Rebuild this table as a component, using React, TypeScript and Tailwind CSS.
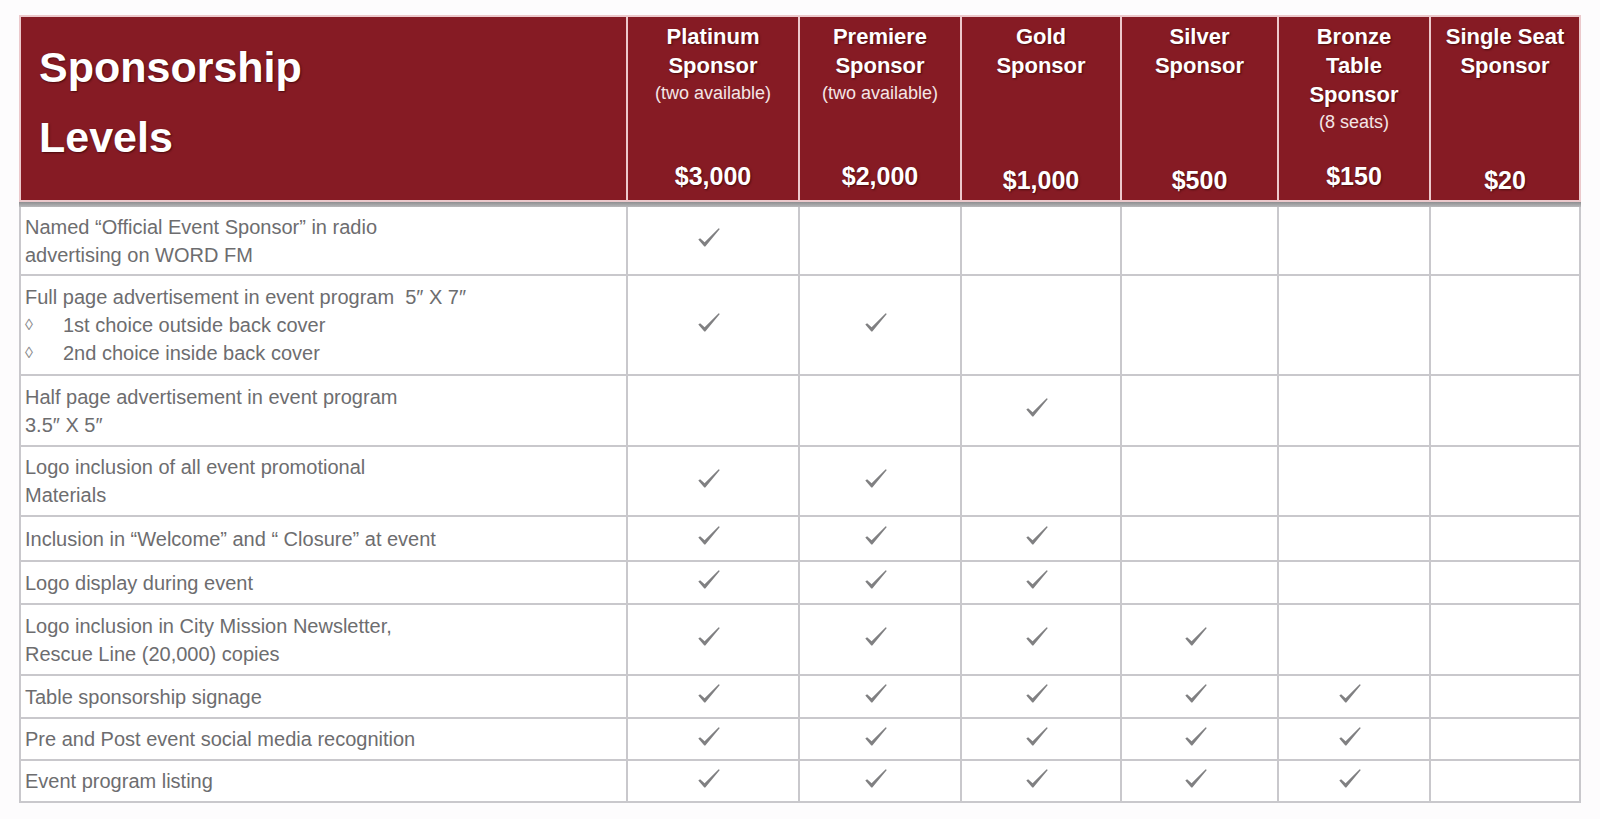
import React from 'react'

// column order: platinum, premiere, gold, silver, bronze, single seat
type Row = {
  lines: React.ReactNode[]
  checks: boolean[]
  h: string
}

const rows: Row[] = [
  {
    lines: ['Named “Official Event Sponsor” in radio', 'advertising on WORD FM'],
    checks: [true, false, false, false, false, false],
    h: 'h-[69px]',
  },
  {
    lines: [
      'Full page advertisement in event program\u00a0\u00a05″ X 7″',
      <Bullet key="a" text="1st choice outside back cover" />,
      <Bullet key="b" text="2nd choice inside back cover" />,
    ],
    checks: [true, true, false, false, false, false],
    h: 'h-[100px]',
  },
  {
    lines: ['Half page advertisement in event program', '3.5″ X 5″'],
    checks: [false, false, true, false, false, false],
    h: 'h-[71px]',
  },
  {
    lines: ['Logo inclusion of all event promotional', 'Materials'],
    checks: [true, true, false, false, false, false],
    h: 'h-[70px]',
  },
  {
    lines: ['Inclusion in “Welcome” and “ Closure” at event'],
    checks: [true, true, true, false, false, false],
    h: 'h-[45px]',
  },
  {
    lines: ['Logo display during event'],
    checks: [true, true, true, false, false, false],
    h: 'h-[43px]',
  },
  {
    lines: ['Logo inclusion in City Mission Newsletter,', 'Rescue Line (20,000) copies'],
    checks: [true, true, true, true, false, false],
    h: 'h-[71px]',
  },
  {
    lines: ['Table sponsorship signage'],
    checks: [true, true, true, true, true, false],
    h: 'h-[43px]',
  },
  {
    lines: ['Pre and Post event social media recognition'],
    checks: [true, true, true, true, true, false],
    h: 'h-[42px]',
  },
  {
    lines: ['Event program listing'],
    checks: [true, true, true, true, true, false],
    h: 'h-[42px]',
  },
]

const levels = [
  { name: ['Platinum', 'Sponsor'], note: '(two available)', price: '$3,000', low: false },
  { name: ['Premiere', 'Sponsor'], note: '(two available)', price: '$2,000', low: false },
  { name: ['Gold', 'Sponsor'], note: '', price: '$1,000', low: true },
  { name: ['Silver', 'Sponsor'], note: '', price: '$500', low: true },
  { name: ['Bronze', 'Table', 'Sponsor'], note: '(8 seats)', price: '$150', low: false },
  { name: ['Single Seat', 'Sponsor'], note: '', price: '$20', low: true },
]

const cols = 'grid grid-cols-[607px_172px_162px_160px_157px_152px_150px]'
const shadow = '[text-shadow:1px_1px_2px_rgba(40,0,0,0.65)]'

function Bullet({ text }: { text: string }) {
  return (
    <span className="flex">
      <span className="w-[38px] text-[16px] text-[#8a8a8c]">◊</span>
      <span>{text}</span>
    </span>
  )
}

function Check() {
  return (
    <svg width="22" height="19" viewBox="0 0 22 19" className="text-[#808082]">
      <path d="M0.3 11.6 L2.1 10.2 L6.6 14.3 L20.7 0.2 L21.8 1.1 L7.3 18.4 L6.3 18.4 Z" fill="currentColor" />
    </svg>
  )
}

const App = () => {
  return (
    <div className="min-h-[819px] bg-[#fdfcfd] pt-[15px] pl-[19px] font-['Liberation_Sans',Arial,sans-serif]">
      <div className="w-[1562px]">
        {/* Header */}
        <div className={`${cols} h-[187px] bg-[#861b24] border-t-2 border-l-2 border-b-2 border-[#ecc9cc] text-white`}>
          <div className={`border-r-2 border-[#ecc9cc] pl-[18px] pt-[15px] text-[43px] font-bold leading-[70px] ${shadow}`}>
            <div>Sponsorship</div>
            <div>Levels</div>
          </div>
          {levels.map((lv) => (
            <div
              key={lv.price}
              className={`flex flex-col items-center border-r-2 border-[#ecc9cc] pt-[5px] text-center ${lv.low ? 'pb-[5px]' : 'pb-[9px]'}`}
            >
              {lv.name.map((n) => (
                <div key={n} className={`text-[22px] font-bold leading-[29px] ${shadow}`}>
                  {n}
                </div>
              ))}
              {lv.note && <div className="text-[18px] leading-[27px] text-[#f4e6e6]">{lv.note}</div>}
              <div className={`mt-auto text-[25px] font-bold leading-[29px] ${shadow}`}>{lv.price}</div>
            </div>
          ))}
        </div>
        <div className="h-[5px] bg-gradient-to-b from-[#8e8e90] to-[#b9b9bb]" />

        {/* Body */}
        <div className="border-l-2 border-[#c9c8cc] bg-white">
          {rows.map((row, i) => (
            <div key={i} className={`${cols} ${row.h} border-b-2 border-[#c9c8cc]`}>
              <div className="flex flex-col justify-center border-r-2 border-[#c9c8cc] pl-[4px] text-[20px] leading-[28px] text-[#6d6d6f]">
                {row.lines.map((l, j) => (
                  <div key={j}>{l}</div>
                ))}
              </div>
              {row.checks.map((c, j) => (
                <div key={j} className="flex items-center justify-center border-r-2 border-[#c9c8cc] pr-[8px] pb-[6px]">
                  {c && <Check />}
                </div>
              ))}
            </div>
          ))}
        </div>
      </div>
    </div>
  )
}

export default App
